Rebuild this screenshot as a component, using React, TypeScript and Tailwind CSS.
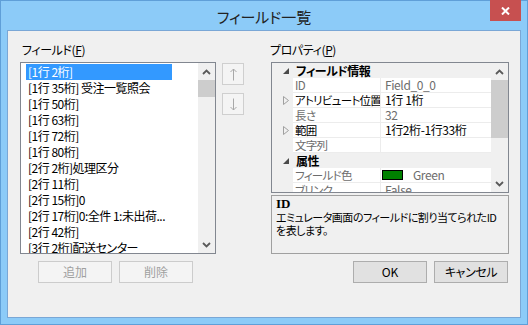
import React from "react";

const FONT = "font-['Noto_Sans_CJK_JP','Noto_Sans',sans-serif] [font-feature-settings:'palt']";

function ChevUp() {
  return (
    <svg width="9" height="6" viewBox="0 0 9 6">
      <path d="M1 5 L4.5 1.5 L8 5" fill="none" stroke="#5a5a5a" strokeWidth="1.8" />
    </svg>
  );
}
function ChevDown() {
  return (
    <svg width="9" height="6" viewBox="0 0 9 6">
      <path d="M1 1 L4.5 4.5 L8 1" fill="none" stroke="#5a5a5a" strokeWidth="1.8" />
    </svg>
  );
}

function Collapse() {
  return (
    <svg width="6" height="6" viewBox="0 0 6 6">
      <polygon points="6,0 6,6 0,6" fill="#4a4a4a" />
    </svg>
  );
}
function Expand() {
  return (
    <svg width="6" height="9" viewBox="0 0 6 9">
      <polygon points="0.5,0.5 5.5,4.5 0.5,8.5" fill="none" stroke="#a0a0a0" strokeWidth="1" />
    </svg>
  );
}

const items = [
  "[1行 2桁]",
  "[1行 35桁] 受注一覧照会",
  "[1行 50桁]",
  "[1行 63桁]",
  "[1行 72桁]",
  "[1行 80桁]",
  "[2行 2桁]処理区分",
  "[2行 11桁]",
  "[2行 15桁]0",
  "[2行 17桁]0:全件 1:未出荷...",
  "[2行 42桁]",
  "[3行 2桁]配送センター",
];

type Row =
  | { kind: "cat"; label: string }
  | { kind: "prop"; name: string; value: string; gray?: boolean; expand?: boolean; swatch?: boolean };

const rows: Row[] = [
  { kind: "cat", label: "フィールド情報" },
  { kind: "prop", name: "ID", value: "Field_0_0", gray: true },
  { kind: "prop", name: "アトリビュート位置", value: "1行 1桁", expand: true },
  { kind: "prop", name: "長さ", value: "32", gray: true },
  { kind: "prop", name: "範囲", value: "1行2桁-1行33桁", expand: true },
  { kind: "prop", name: "文字列", value: "", gray: true },
  { kind: "cat", label: "属性" },
  { kind: "prop", name: "フィールド色", value: "Green", gray: true, swatch: true },
  { kind: "prop", name: "ブリンク", value: "False", gray: true },
];

function ArrowBtn({ down }: { down?: boolean }) {
  return (
    <div className="w-[22px] h-[22px] border border-[#cfcfcf] bg-[#f4f4f4] flex items-center justify-center">
      <svg width="7" height="13" viewBox="0 0 7 13">
        {down ? (
          <path d="M3.5 0.5 V12 M0.5 9 L3.5 12 L6.5 9" fill="none" stroke="#a8a8a8" strokeWidth="1" />
        ) : (
          <path d="M3.5 12.5 V1 M0.5 4 L3.5 1 L6.5 4" fill="none" stroke="#a8a8a8" strokeWidth="1" />
        )}
      </svg>
    </div>
  );
}

export default function App() {
  return (
    <div className={`w-[528px] h-[325px] bg-[#8ccbf8] border border-[#5f9fd8] flex flex-col text-black ${FONT}`}>
      {/* title bar */}
      <div className="relative h-[29px] shrink-0 flex items-start justify-center pt-[6px]">
        <span className="text-[15px] leading-[20px] text-[#222]">フィールド一覧</span>
        <div className="absolute right-[6px] top-[-1px] w-[31px] h-[21px] bg-[#c75050] flex items-center justify-center">
          <svg width="9" height="8" viewBox="0 0 9 8">
            <path d="M1 0.5 L8 7.5 M8 0.5 L1 7.5" stroke="#fff" strokeWidth="2" />
          </svg>
        </div>
      </div>

      {/* client */}
      <div className="mx-[6px] h-[288px] shrink-0 border border-[#7aa7d6] bg-[#f0f0f0] flex pl-[12px]">
        {/* left group */}
        <div className="w-[196px] flex flex-col">
          <div className="h-[16px] mt-[11px] mb-[4px] pl-[2px] text-[12px] leading-[16px] tracking-[-0.4px]">
            フィールド(<span className="underline">F</span>)
          </div>
          <div className="w-[196px] h-[192px] border border-[#828790] bg-white flex overflow-hidden">
            <div className="flex-1 pt-[1px] pl-[5px] overflow-hidden">
              {items.map((t, i) => (
                <div
                  key={i}
                  className={
                    i === 0
                      ? "h-[16px] leading-[16px] pl-[2px] w-[146px] whitespace-nowrap text-[12px] tracking-[-0.5px] bg-[#3399ff] text-white"
                      : "h-[16px] leading-[16px] pl-[2px] whitespace-nowrap text-[12px] tracking-[-0.5px] text-black"
                  }
                >
                  {t}
                </div>
              ))}
            </div>
            <div className="w-[17px] bg-[#f0f0f0] flex flex-col">
              <div className="h-[17px] flex items-center justify-center">
                <ChevUp />
              </div>
              <div className="h-[17px] bg-[#cdcdcd]" />
              <div className="flex-1" />
              <div className="h-[17px] flex items-center justify-center">
                <ChevDown />
              </div>
            </div>
          </div>
          <div className="flex gap-[7px] pl-[18px] mt-[7px]">
            <div className="w-[74px] h-[22px] border border-[#cccccc] bg-[#f4f4f4] text-[#a0a0a0] text-[12px] flex items-center justify-center">
              追加
            </div>
            <div className="w-[74px] h-[22px] border border-[#cccccc] bg-[#f4f4f4] text-[#a0a0a0] text-[12px] flex items-center justify-center">
              削除
            </div>
          </div>
        </div>

        {/* up/down */}
        <div className="w-[22px] ml-[6px] pt-[32px] flex flex-col gap-[8px]">
          <ArrowBtn />
          <ArrowBtn down />
        </div>

        {/* right group */}
        <div className="w-[238px] ml-[27px] flex flex-col">
          <div className="h-[16px] mt-[11px] mb-[4px] -ml-[1px] text-[12px] leading-[16px] tracking-[-0.4px]">
            プロパティ(<span className="underline">P</span>)
          </div>
          <div className="w-[238px] h-[131px] border border-[#828790] bg-white flex overflow-hidden">
            <div className="flex-1 flex flex-col overflow-hidden">
              {rows.map((r, i) =>
                r.kind === "cat" ? (
                  <div key={i} className="h-[15px] shrink-0 bg-[#f0f0f0] flex items-center">
                    <div className="w-[21px] h-full flex items-center justify-end pr-[4px]">
                      <Collapse />
                    </div>
                    <span className="pl-[3px] text-[12px] leading-[15px] font-bold tracking-[-0.5px]">{r.label}</span>
                  </div>
                ) : (
                  <div key={i} className="h-[15px] shrink-0 flex">
                    <div className="w-[21px] h-full bg-[#f0f0f0] flex items-center justify-end pr-[4px]">
                      {r.expand ? <Expand /> : null}
                    </div>
                    <div
                      className={
                        r.gray
                          ? "w-[88px] h-full border-b border-r border-[#ececec] pl-[2px] text-[11.5px] leading-[14px] tracking-[-0.7px] whitespace-nowrap overflow-hidden text-[#6d6d6d]"
                          : "w-[88px] h-full border-b border-r border-[#ececec] pl-[2px] text-[11.5px] leading-[14px] tracking-[-0.7px] whitespace-nowrap overflow-hidden text-black"
                      }
                    >
                      {r.name}
                    </div>
                    <div
                      className={
                        r.gray
                          ? "flex-1 h-full border-b border-[#ececec] pl-[4px] text-[12px] leading-[14px] tracking-[-0.4px] whitespace-nowrap flex items-center text-[#6d6d6d]"
                          : "flex-1 h-full border-b border-[#ececec] pl-[4px] text-[12px] leading-[14px] tracking-[-0.4px] whitespace-nowrap flex items-center text-black"
                      }
                    >
                      {r.swatch ? (
                        <span className="inline-block w-[21px] h-[10px] bg-[#008000] border border-black mr-[10px] ml-[-3px]" />
                      ) : null}
                      {r.value}
                    </div>
                  </div>
                )
              )}
            </div>
            <div className="w-[17px] bg-[#f0f0f0] flex flex-col">
              <div className="h-[17px] flex items-center justify-center">
                <ChevUp />
              </div>
              <div className="h-[58px] bg-[#cdcdcd]" />
              <div className="flex-1" />
              <div className="h-[17px] flex items-center justify-center">
                <ChevDown />
              </div>
            </div>
          </div>
          <div className="mt-[2px] h-[59px] border border-[#a0a0a0] bg-[#f0f0f0] pl-[4px] pt-[1px]">
            <div className="font-bold text-[13px] leading-[14px] font-['Liberation_Serif',serif]">ID</div>
            <div className="text-[11px] leading-[13px] tracking-[-0.5px] whitespace-nowrap">
              エミュレータ画面のフィールドに割り当てられたID
              <br />
              を表します。
            </div>
          </div>
          <div className="flex justify-end gap-[7px] mt-[7px] pr-[1px]">
            <div className="w-[74px] h-[22px] border border-[#adadad] bg-[#e1e1e1] text-[12px] flex items-center justify-center">
              OK
            </div>
            <div className="w-[74px] h-[22px] border border-[#adadad] bg-[#e1e1e1] text-[12px] tracking-[-0.4px] flex items-center justify-center">
              キャンセル
            </div>
          </div>
        </div>
      </div>
    </div>
  );
}
